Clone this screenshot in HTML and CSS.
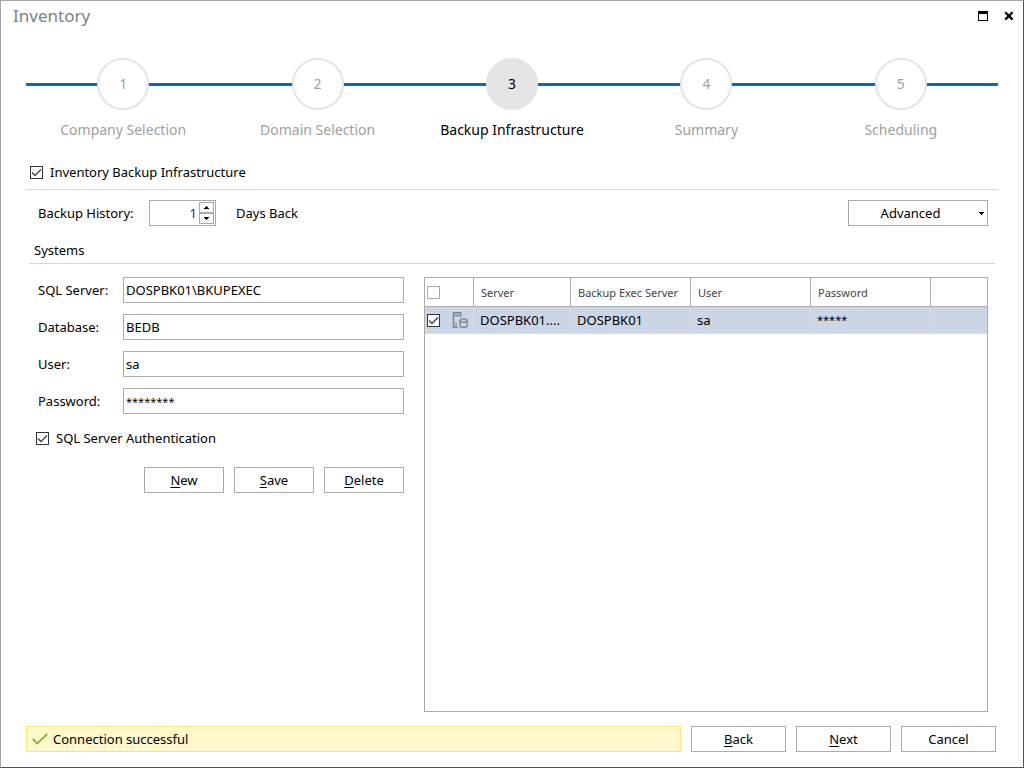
FILE: index.html
```html
<!DOCTYPE html>
<html lang="en">
<head>
<meta charset="utf-8">
<title>Inventory</title>
<link rel="stylesheet" href="styles.css">
</head>
<body>
<div class="window">
  <header class="titlebar">
    <h1 class="title">Inventory</h1>
    <div class="window-controls">
      <button class="window-button" type="button" aria-label="Maximize">
        <svg width="10" height="10" viewBox="0 0 10 10" shape-rendering="crispEdges"><path d="M0 0h10v10H0zM1 3v6h8V3z" fill="#000" fill-rule="evenodd"/></svg>
      </button>
      <button class="window-button" type="button" aria-label="Close">
        <svg width="10" height="10" viewBox="0 0 10 10"><path d="M1.2 1.2l7.4 7.4M8.6 1.2L1.2 8.6" stroke="#000" stroke-width="2.2"/></svg>
      </button>
    </div>
  </header>

  <ol class="stepper">
    <li class="step"><span class="step-circle">1</span><span class="step-label">Company Selection</span></li>
    <li class="step"><span class="step-circle">2</span><span class="step-label">Domain Selection</span></li>
    <li class="step step-current" aria-current="step"><span class="step-circle">3</span><span class="step-label">Backup Infrastructure</span></li>
    <li class="step"><span class="step-circle">4</span><span class="step-label">Summary</span></li>
    <li class="step"><span class="step-circle">5</span><span class="step-label">Scheduling</span></li>
  </ol>

  <main class="content">
    <div class="section-head">
      <label class="check"><input class="checkbox" type="checkbox" checked> Inventory Backup Infrastructure</label>
    </div>

    <div class="history">
      <label class="history-label" for="history">Backup History:</label>
      <div class="spinner">
        <input class="spinner-input" id="history" type="text" inputmode="numeric" value="1">
        <div class="spinner-buttons">
          <button class="spinner-button" type="button" aria-label="Increase"><svg width="5" height="3" viewBox="0 0 5 3" shape-rendering="crispEdges"><path d="M2 0h1v1h1v1h1v1H0V2h1V1h1z"/></svg></button>
          <button class="spinner-button" type="button" aria-label="Decrease"><svg width="5" height="3" viewBox="0 0 5 3" shape-rendering="crispEdges"><path d="M0 0h5v1H4v1H3v1H2V2H1V1H0z"/></svg></button>
        </div>
      </div>
      <span class="history-unit">Days Back</span>
      <button class="button advanced" type="button" aria-haspopup="menu">
        <span class="advanced-text">Advanced</span>
        <svg width="5" height="3" viewBox="0 0 5 3" shape-rendering="crispEdges"><path d="M0 0h5v1H4v1H3v1H2V2H1V1H0z"/></svg>
      </button>
    </div>

    <h2 class="systems-title">Systems</h2>

    <div class="systems">
      <form class="form">
        <div class="fields">
          <label for="server">SQL Server:</label>
          <input class="field" id="server" type="text" value="DOSPBK01\BKUPEXEC">
          <label for="database">Database:</label>
          <input class="field" id="database" type="text" value="BEDB">
          <label for="user">User:</label>
          <input class="field" id="user" type="text" value="sa">
          <label for="password">Password:</label>
          <input class="field masked" id="password" type="text" value="********">
        </div>
        <label class="check auth"><input class="checkbox" type="checkbox" checked> SQL Server Authentication</label>
        <div class="form-buttons">
          <button class="button" type="button"><u>N</u>ew</button>
          <button class="button" type="button"><u>S</u>ave</button>
          <button class="button" type="button"><u>D</u>elete</button>
        </div>
      </form>

      <div class="grid">
        <table class="table">
          <colgroup>
            <col class="col-select"><col class="col-server"><col class="col-wide"><col class="col-wide"><col class="col-wide"><col>
          </colgroup>
          <thead>
            <tr>
              <th class="select-cell"><input class="checkbox checkbox-light" type="checkbox" aria-label="Select all"></th>
              <th>Server</th>
              <th>Backup Exec Server</th>
              <th>User</th>
              <th>Password</th>
              <th></th>
            </tr>
          </thead>
          <tbody>
            <tr>
              <td class="select-cell">
                <div class="select-inner">
                  <input class="checkbox" type="checkbox" checked aria-label="Select DOSPBK01">
                  <svg width="16" height="16" viewBox="0 0 16 16" fill="none" stroke="#7b8087">
                    <path d="M6 15.500H1.500V.800H8.500V5" stroke-width="1.500"/>
                    <path d="M3 3.500h4" stroke-width="1.500"/>
                    <path d="M3 11.500h2M3 13.500h2"/>
                    <path d="M8 8.500v5.300c0 .9 1.500 1.600 3.500 1.600s3.500-.7 3.500-1.600V8.500" stroke-width="1.300"/>
                    <ellipse cx="11.500" cy="8.500" rx="3.500" ry="1.700" stroke-width="1.300"/>
                  </svg>
                </div>
              </td>
              <td>DOSPBK01....</td>
              <td>DOSPBK01</td>
              <td>sa</td>
              <td class="masked">*****</td>
              <td></td>
            </tr>
          </tbody>
        </table>
      </div>
    </div>
  </main>

  <footer class="footer">
    <div class="status" role="status">
      <svg width="16" height="12" viewBox="0 0 16 12"><path d="M.7 6l4.600 4.600L15.300.8" fill="none" stroke="#7ab51d" stroke-width="1.800"/></svg>
      <span>Connection successful</span>
    </div>
    <button class="button footer-button" type="button"><u>B</u>ack</button>
    <button class="button footer-button" type="button"><u>N</u>ext</button>
    <button class="button footer-button" type="button">Cancel</button>
  </footer>
</div>
</body>
</html>
```

FILE: styles.css
```css
* {
  box-sizing: border-box;
}

body {
  margin: 0;
  font-family: "Noto Sans", "Open Sans", sans-serif;
  font-size: 13px;
  line-height: 18px;
  color: #000;
  background: #fff;
}

.window {
  display: flex;
  flex-direction: column;
  min-height: 100vh;
  border: 1px solid #a6a6a6;
  border-right-color: #2b5797;
  border-bottom-color: #2b5797;
}

.titlebar {
  display: flex;
  justify-content: space-between;
  align-items: center;
  height: 30px;
  padding: 0 9px 0 12px;
}

.title {
  margin: 0;
  font-size: 17px;
  line-height: 24px;
  font-weight: 400;
  color: #808080;
}

.window-controls {
  display: flex;
  gap: 16px;
}

.window-button {
  display: flex;
  padding: 0;
  border: 0;
  background: none;
}

.stepper {
  display: grid;
  grid-template-columns: repeat(5, 1fr);
  margin: 27px 25px 0;
  padding: 0;
  list-style: none;
  font-size: 14px;
  line-height: 20px;
  color: #a0a0a0;
  background: linear-gradient(#1068b5, #1068b5) 0 25px / 100% 3px no-repeat;
}

.step {
  display: flex;
  flex-direction: column;
  align-items: center;
  gap: 10px;
}

.step-circle {
  display: flex;
  align-items: center;
  justify-content: center;
  width: 52px;
  height: 52px;
  border: 2px solid #e5e5e5;
  border-radius: 50%;
  background: #fff;
}

.step-current {
  color: #000;
}

.step-current .step-circle {
  background: #e5e5e5;
}

.content {
  display: flex;
  flex: 1;
  flex-direction: column;
  padding: 23px 25px 0;
}

.section-head {
  padding: 0 4px 8px;
  border-bottom: 1px solid #d6d6d6;
}

.check {
  display: flex;
  align-items: center;
  gap: 7px;
}

.checkbox {
  appearance: none;
  flex: none;
  width: 13px;
  height: 13px;
  margin: 0;
  border: 1px solid #333;
  background: #fff;
}

.checkbox:checked {
  background: #fff url("data:image/svg+xml,%3Csvg xmlns='http://www.w3.org/2000/svg' viewBox='0 0 11 11'%3E%3Cpath d='M1 5.500l3 3 6-6' fill='none' stroke='%23444' stroke-width='1.400'/%3E%3C/svg%3E") center / 11px 11px no-repeat;
}

.checkbox-light {
  border-color: #ababab;
}

.history {
  display: flex;
  align-items: center;
  padding: 10px 10px 0 12px;
}

.history-label {
  width: 111px;
}

.spinner {
  display: flex;
  width: 67px;
  height: 26px;
  padding: 1px;
  border: 1px solid #ababab;
}

.spinner-input {
  flex: 1;
  min-width: 0;
  padding: 0 2px;
  border: 0;
  font: inherit;
  color: #24345c;
  text-align: right;
}

.spinner-buttons {
  display: flex;
  flex-direction: column;
  width: 15px;
}

.spinner-button {
  display: flex;
  flex: 1;
  align-items: center;
  justify-content: center;
  padding: 0;
  border: 1px solid #ababab;
  background: #fff;
}

.history-unit {
  margin-left: 20px;
}

.button {
  height: 26px;
  padding: 0 6px;
  border: 1px solid #ababab;
  border-radius: 0;
  background: #fff;
  font: inherit;
  color: #000;
}

.button u {
  text-underline-offset: 2px;
}

.advanced {
  display: flex;
  align-items: center;
  width: 140px;
  margin-left: auto;
  padding: 0 3px;
}

.advanced-text {
  flex: 1;
  padding-right: 10px;
}

.systems-title {
  margin: 15px 3px 0;
  padding: 0 5px 4px;
  border-bottom: 1px solid #d6d6d6;
  font-size: 13px;
  line-height: 18px;
  font-weight: 400;
}

.systems {
  display: flex;
  flex: 1;
  gap: 20px;
  padding: 13px 10px 0;
}

.form {
  flex: 0 0 368px;
}

.fields {
  display: grid;
  grid-template-columns: 85px 1fr;
  gap: 11px 0;
  align-items: center;
  padding-left: 2px;
}

.field {
  width: 100%;
  height: 26px;
  padding: 0 2px;
  border: 1px solid #ababab;
  font: inherit;
  color: #000;
}

.masked {
  font-size: 11px;
}

.auth {
  margin-top: 15px;
}

.form-buttons {
  display: flex;
  justify-content: flex-end;
  gap: 10px;
  margin-top: 20px;
}

.form-buttons .button {
  width: 80px;
}

.grid {
  flex: 1;
  min-width: 0;
  border: 1px solid #ababab;
}

.table {
  width: 100%;
  table-layout: fixed;
  border-collapse: separate;
  border-spacing: 0;
}

.col-select {
  width: 49px;
}

.col-server {
  width: 97px;
}

.col-wide {
  width: 120px;
}

.table th {
  height: 29px;
  padding: 2px 7px 0;
  border-right: 1px solid #ababab;
  border-bottom: 1px solid #ababab;
  font-size: 11px;
  font-weight: 400;
  text-align: left;
  white-space: nowrap;
  color: #444;
}

.table td {
  height: 27px;
  padding: 0 6px;
  border-right: 1px solid #dcdcdc;
  border-bottom: 1px solid #dcdcdc;
  white-space: nowrap;
  background: #cad5e6;
}

.table th:last-child,
.table td:last-child {
  border-right: 0;
}

.table .select-cell {
  padding: 0 0 0 2px;
}

.select-cell .checkbox {
  display: block;
}

.select-inner {
  display: flex;
  align-items: center;
  gap: 12px;
}

.footer {
  display: flex;
  gap: 10px;
  padding: 14px 27px 15px 25px;
}

.status {
  display: flex;
  flex: 1;
  align-items: center;
  gap: 5px;
  height: 26px;
  padding: 0 5px;
  border: 1px solid #fbe96a;
  background: #fff8cc;
}

.footer-button {
  width: 95px;
}
```
